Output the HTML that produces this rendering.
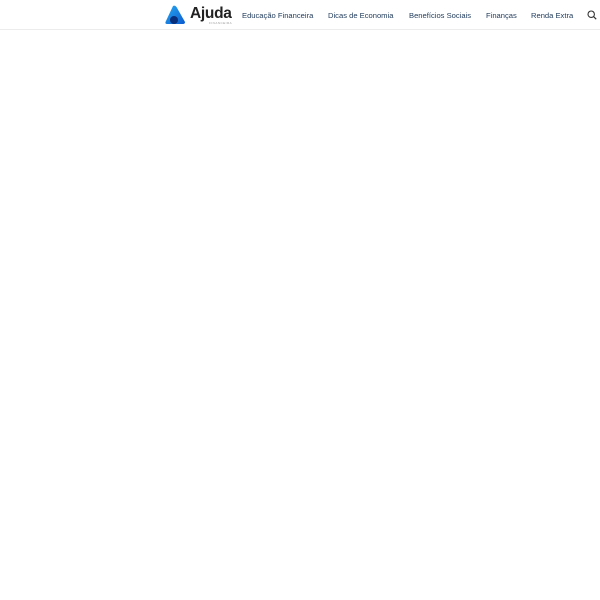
<!DOCTYPE html>
<html><head><style>
body{margin:0;width:600px;height:600px;background:#fff;font-family:"Liberation Sans",sans-serif;overflow:hidden}
.h{position:absolute;top:0;left:0;width:600px;height:29px;border-bottom:1px solid #ececec}
.n{position:absolute;top:11px;font-size:7.6px;color:#1f3a5a;white-space:nowrap}
</style></head><body>
<div class="h">
<svg style="position:absolute;left:164px;top:5px" width="22" height="20" viewBox="0 0 22 20">
<defs><linearGradient id="g" x1="0" y1="0" x2="1" y2="1"><stop offset="0" stop-color="#29a9f0"/><stop offset="1" stop-color="#0b5bd0"/></linearGradient></defs>
<path d="M9 1 Q11 0 12.5 2 L21 17 Q21 19 19 19 L3 19 Q1 19 1.5 17 Z" fill="url(#g)"/>
<circle cx="10" cy="15" r="4" fill="#0a2f7a"/>
</svg>
<div style="position:absolute;left:190px;top:5px;font-size:15.5px;font-weight:bold;color:#222;letter-spacing:-0.3px">Ajuda</div>
<div style="position:absolute;left:209px;top:21px;font-size:3px;color:#999;letter-spacing:0.5px">FINANCEIRA</div>
<div class="n" style="left:242px">Educação Financeira</div>
<div class="n" style="left:328px">Dicas de Economia</div>
<div class="n" style="left:409px">Benefícios Sociais</div>
<div class="n" style="left:486px">Finanças</div>
<div class="n" style="left:531px">Renda Extra</div>
<svg style="position:absolute;left:587px;top:10px" width="10" height="10" viewBox="0 0 10 10"><circle cx="4.2" cy="4.2" r="3.2" fill="none" stroke="#333" stroke-width="1.1"/><path d="M6.6 6.6 L9.2 9.2" stroke="#333" stroke-width="1.2"/></svg>
</div>
</body></html>
